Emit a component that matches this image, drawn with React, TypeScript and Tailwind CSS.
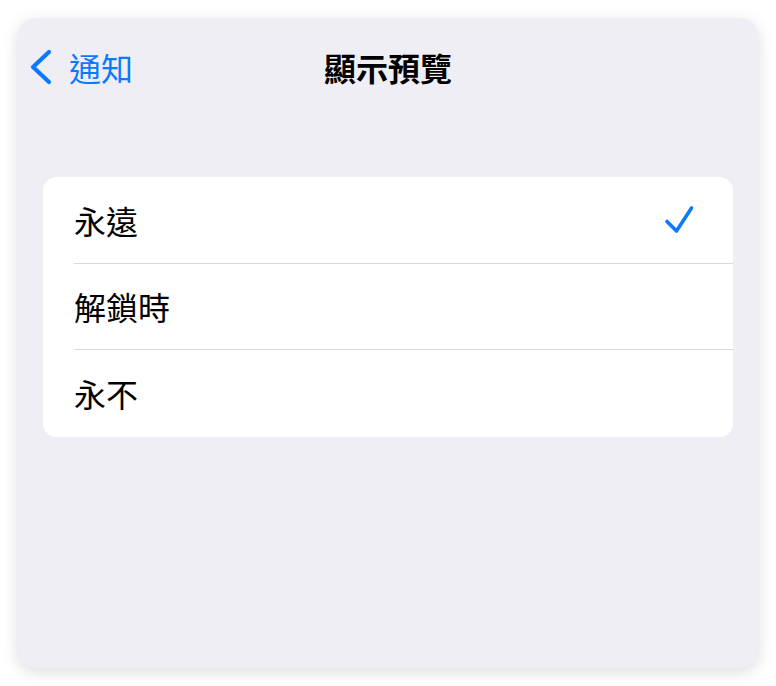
const font = { fontFamily: '"Noto Sans CJK TC", "Noto Sans", sans-serif' };

function Row({ label, checked, last }: { label: string; checked?: boolean; last?: boolean }) {
  return (
    <div className="flex h-[86.5px] pl-[31px]">
      <div className={`flex flex-1 items-center pr-[38px] ${last ? "" : "border-b border-[#d9d9dd]"}`}>
        <span className="flex-1 text-[32px] leading-none text-black">{label}</span>
        {checked && (
          <svg width="32" height="32" viewBox="0 0 32 32" fill="none">
            <path
              d="M4 17.5 L13.5 27 L28.5 4"
              stroke="#0a7aff"
              strokeWidth="3.6"
              strokeLinecap="round"
              strokeLinejoin="round"
            />
          </svg>
        )}
      </div>
    </div>
  );
}

export default function App() {
  return (
    <div className="h-[686px] w-[776px] bg-white p-[18px]" style={font}>
      <div className="flex h-[650px] w-[740px] flex-col rounded-[18px] bg-[#efeef4] shadow-[0_4px_16px_rgba(0,0,0,0.14)]">
        <div className="relative flex h-[98px] items-center justify-center">
          <div className="absolute left-[11px] top-[31px] flex items-center gap-[16px] text-[#0a7aff]">
            <svg width="24" height="36" viewBox="0 0 24 36" fill="none">
              <path
                d="M20 3 L4 18 L20 33"
                stroke="#0a7aff"
                strokeWidth="4.2"
                strokeLinecap="round"
                strokeLinejoin="round"
              />
            </svg>
            <span className="text-[32px] leading-none">通知</span>
          </div>
          <span className="text-[32px] font-bold leading-none text-black">顯示預覽</span>
        </div>
        <div className="mx-[25px] mt-[61px] overflow-hidden rounded-[14px] bg-white">
          <Row label="永遠" checked />
          <Row label="解鎖時" />
          <Row label="永不" last />
        </div>
      </div>
    </div>
  );
}
